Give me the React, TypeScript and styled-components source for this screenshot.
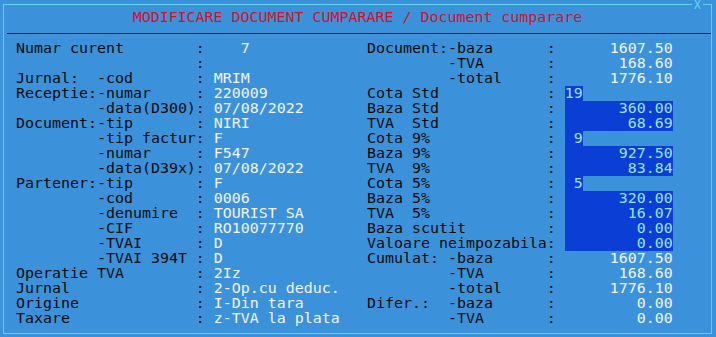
import * as React from 'react';
import styled, { createGlobalStyle } from 'styled-components';

const cell = 9;

const GlobalStyle = createGlobalStyle`
  html, body {
    margin: 0;
    padding: 0;
    background: #3b92da;
  }
`;

const Screen = styled.div`
  width: 716px;
  height: 337px;
  background: #3b92da;
  padding: 4px 4px 0 3px;
  box-sizing: border-box;
  font-family: 'DejaVu Sans Mono', 'Liberation Mono', monospace;
  font-size: 14.95px;
  line-height: 15px;
  white-space: pre;
`;

const Frame = styled.div`
  position: relative;
  height: 330px;
  border: 1px solid #62d4ee;
  box-sizing: border-box;
`;

const CloseMark = styled.span`
  position: absolute;
  top: -5px;
  right: 8px;
  padding: 0 2px;
  font-size: 11.5px;
  line-height: 10px;
  background: #3b92da;
  color: #62d4ee;
`;

const Title = styled.div`
  margin-top: 5px;
  height: 15px;
  text-align: center;
  color: #d0122c;
`;

const Divider = styled.div`
  margin: 8px 0 7px 3px;
  height: 1px;
  background: #0b1730;
`;

const Body = styled.div`
  display: grid;
  grid-template-columns: ${39 * cell}px 1fr;
  padding-left: 12px;
`;

const Panel = styled.div`
  display: flex;
  flex-direction: column;
`;

const Row = styled.div`
  display: flex;
  height: 15px;
`;

const Label = styled.span`
  width: 20ch;
  color: #0a0a0a;
`;

const Colon = styled.span`
  width: 2ch;
  color: #0a0a0a;
`;

const Value = styled.span<{ $width?: number; $right?: boolean; $hl?: boolean }>`
  display: inline-block;
  width: ${p => (p.$width ? `${p.$width}ch` : 'auto')};
  height: 15px;
  text-align: ${p => (p.$right ? 'right' : 'left')};
  color: ${p => (p.$hl ? '#9ce4f4' : '#f2f4f6')};
  background: ${p => (p.$hl ? '#0b3ed4' : 'transparent')};
`;

type Field = {
  label: string;
  value: string;
  width?: number;
  right?: boolean;
  hl?: boolean;
};

const left: Field[] = [
  { label: 'Numar curent', value: '   7' },
  { label: '', value: '' },
  { label: 'Jurnal:  -cod', value: 'MRIM' },
  { label: 'Receptie:-numar', value: '220009' },
  { label: '         -data(D300)', value: '07/08/2022' },
  { label: 'Document:-tip', value: 'NIRI' },
  { label: '         -tip factur', value: 'F' },
  { label: '         -numar', value: 'F547' },
  { label: '         -data(D39x)', value: '07/08/2022' },
  { label: 'Partener:-tip', value: 'F' },
  { label: '         -cod', value: '0006' },
  { label: '         -denumire', value: 'TOURIST SA' },
  { label: '         -CIF', value: 'RO10077770' },
  { label: '         -TVAI', value: 'D' },
  { label: '         -TVAI 394T', value: 'D' },
  { label: 'Operatie TVA', value: '2Iz' },
  { label: 'Jurnal', value: '2-Op.cu deduc.' },
  { label: 'Origine', value: 'I-Din tara' },
  { label: 'Taxare', value: 'z-TVA la plata' },
];

const amount = (label: string, value: string, hl = false): Field => ({
  label,
  value,
  width: 12,
  right: true,
  hl,
});

const rate = (label: string, value: string): Field => ({
  label,
  value,
  width: 2,
  right: true,
  hl: true,
});

const right: Field[] = [
  amount('Document:-baza', '1607.50'),
  amount('         -TVA', '168.60'),
  amount('         -total', '1776.10'),
  rate('Cota Std', '19'),
  amount('Baza Std', '360.00', true),
  amount('TVA  Std', '68.69', true),
  rate('Cota 9%', '9'),
  amount('Baza 9%', '927.50', true),
  amount('TVA  9%', '83.84', true),
  rate('Cota 5%', '5'),
  amount('Baza 5%', '320.00', true),
  amount('TVA  5%', '16.07', true),
  amount('Baza scutit', '0.00', true),
  amount('Valoare neimpozabila', '0.00', true),
  amount('Cumulat: -baza', '1607.50'),
  amount('         -TVA', '168.60'),
  amount('         -total', '1776.10'),
  amount('Difer.:  -baza', '0.00'),
  amount('         -TVA', '0.00'),
];

const FieldList = ({ fields }: { fields: Field[] }) => (
  <Panel>
    {fields.map((f, i) => (
      <Row key={i}>
        <Label>{f.label}</Label>
        <Colon>:</Colon>
        <Value $width={f.width} $right={f.right} $hl={f.hl}>
          {f.value}
        </Value>
      </Row>
    ))}
  </Panel>
);

export default function App() {
  return (
    <>
      <GlobalStyle />
      <Screen>
        <Frame>
          <CloseMark>X</CloseMark>
          <Title>MODIFICARE DOCUMENT CUMPARARE / Document cumparare</Title>
          <Divider />
          <Body>
            <FieldList fields={left} />
            <FieldList fields={right} />
          </Body>
        </Frame>
      </Screen>
    </>
  );
}
